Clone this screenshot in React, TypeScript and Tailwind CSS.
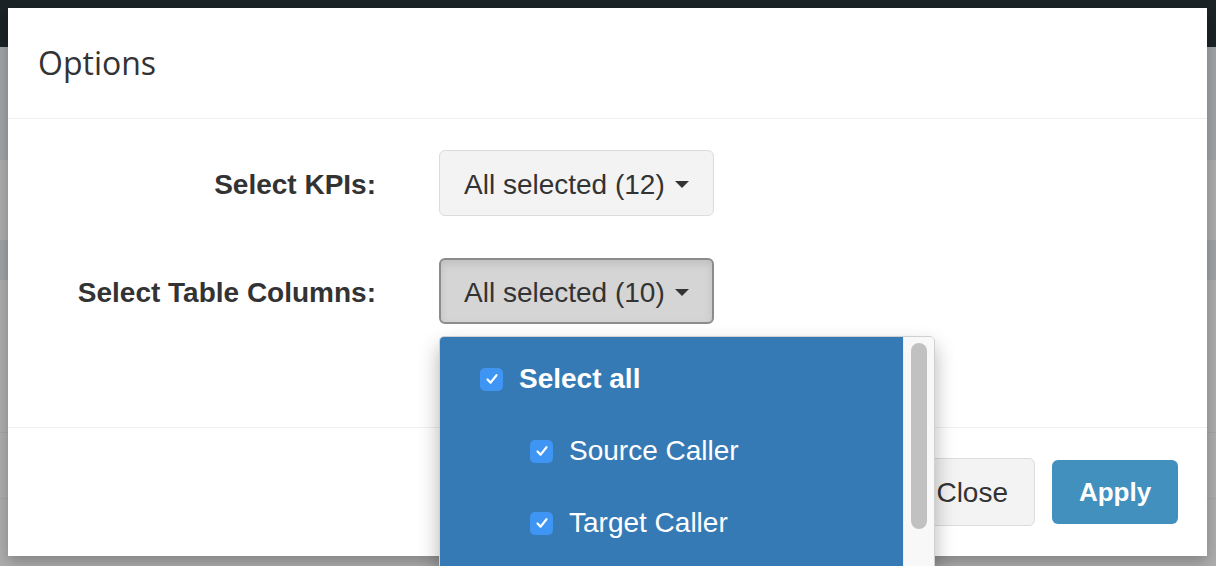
import React from "react";

const sans = { fontFamily: '"Liberation Sans", Arial, Helvetica, sans-serif' };

function Check() {
  return (
    <span className="flex h-[23px] w-[23px] shrink-0 items-center justify-center rounded-[5px] bg-[#3e95f3]">
      <svg width="14" height="14" viewBox="0 0 14 14" fill="none">
        <path d="M2.5 7.5 L5.6 10.6 L11.5 3.2" stroke="white" strokeWidth="2.2" strokeLinecap="round" strokeLinejoin="round" />
      </svg>
    </span>
  );
}

function Caret() {
  return <span className="ml-[10px] inline-block h-0 w-0 border-x-[7px] border-t-[7px] border-x-transparent border-t-[#333]" />;
}

export default function App() {
  return (
    <div className="relative h-[566px] w-[1216px] overflow-hidden bg-[#aeaeae]" style={sans}>
      {/* background page under backdrop */}
      <div className="h-[47px] bg-[#1b2327]" />
      <div className="h-[113px] bg-[#a1a4a7]" />
      <div className="h-[80px] bg-[#aeaeae]" />
      <div className="h-[40px] bg-[#a0a3a6]" />
      <div className="h-[153px] border-b border-[#a6a6a6] bg-[#aeaeae]" />
      <div className="h-[66px] border-b border-[#a6a6a6] bg-[#aeaeae]" />

      {/* modal */}
      <div className="absolute left-[8px] top-[8px] flex h-[548px] w-[1199px] flex-col bg-white shadow-[0_6px_14px_rgba(0,0,0,0.25)]">
        <div className="flex h-[111px] items-center border-b border-[#efefef] px-[30px]">
          <h2 className="text-[32px] text-[#333]" style={{ fontFamily: '"Open Sans", sans-serif' }}>
            Options
          </h2>
        </div>

        <div className="flex h-[309px] flex-col gap-[42px] border-b border-[#efefef] pt-[31px]">
          <div className="flex items-center">
            <div className="w-[368px] pt-[4px] text-right text-[28px] font-bold text-[#333]">Select KPIs:</div>
            <button className="ml-[63px] flex h-[66px] items-center rounded-[6px] border border-[#dcdcdc] bg-[#f3f3f3] px-[24px] pt-[3px] text-[28px] text-[#333]">
              All selected (12)
              <Caret />
            </button>
          </div>
          <div className="flex items-center">
            <div className="w-[368px] pt-[4px] text-right text-[28px] font-bold text-[#333]">Select Table Columns:</div>
            <div className="relative ml-[63px]">
              <button className="flex h-[66px] items-center rounded-[6px] border-2 border-[#8c8c8c] bg-[#d5d5d5] px-[23px] pt-[3px] text-[28px] text-[#333] shadow-[inset_0_4px_8px_rgba(0,0,0,0.1)]">
                All selected (10)
                <Caret />
              </button>
              {/* dropdown menu */}
              <div className="absolute left-0 top-[78px] z-10 flex h-[240px] w-[496px] overflow-hidden rounded-t-[5px] border border-[#d0d0d0] bg-white shadow-[0_10px_20px_rgba(0,0,0,0.3)]">
                <div className="flex-1 bg-[#367ab5] pt-[6px] text-white">
                  <div className="flex h-[72px] items-center gap-[16px] pl-[40px]">
                    <Check />
                    <span className="text-[28px] font-bold">Select all</span>
                  </div>
                  <div className="flex h-[72px] items-center gap-[16px] pl-[90px]">
                    <Check />
                    <span className="text-[28px]">Source Caller</span>
                  </div>
                  <div className="flex h-[72px] items-center gap-[16px] pl-[90px]">
                    <Check />
                    <span className="text-[28px]">Target Caller</span>
                  </div>
                </div>
                <div className="w-[31px] border-l border-[#ededed] bg-[#f8f8f8] pl-[7px] pt-[6px]">
                  <div className="h-[186px] w-[16px] rounded-full bg-[#c1c1c1]" />
                </div>
              </div>
            </div>
          </div>
        </div>

        <div className="flex flex-1 items-center justify-end gap-[17px] px-[29px]">
          <button className="flex h-[68px] items-center rounded-[6px] border border-[#dcdcdc] bg-[#f3f3f3] px-[26px] pt-[2px] text-[28px] text-[#333]">
            Close
          </button>
          <button className="flex h-[64px] w-[126px] items-center justify-center rounded-[6px] bg-[#4290be] text-[26px] font-bold text-white">
            Apply
          </button>
        </div>
      </div>
    </div>
  );
}
